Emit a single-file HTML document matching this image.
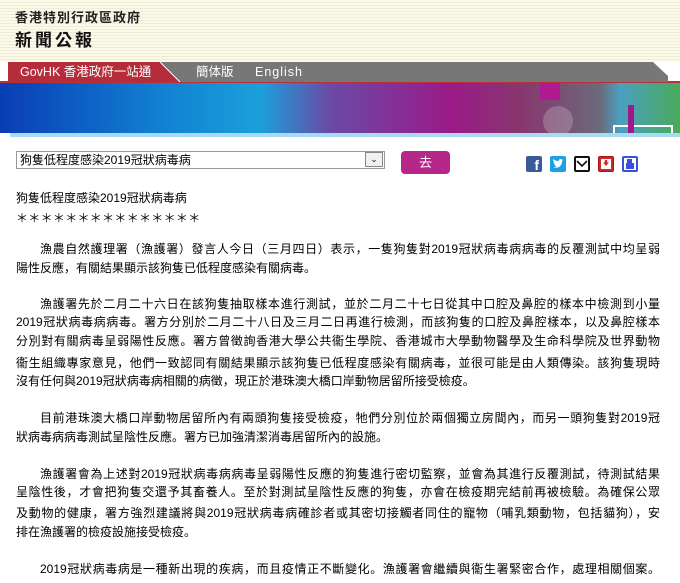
<!DOCTYPE html>
<html><head><meta charset="utf-8"><style>
*{margin:0;padding:0;box-sizing:border-box}
body{width:680px;height:583px;overflow:hidden;background:#fff;position:relative;font-family:"Liberation Sans","Noto Sans CJK TC",sans-serif;color:#000}
.hdr{position:absolute;left:0;top:0;width:680px;height:62px;background:repeating-linear-gradient(#fbf9ea 0 2px,#efecd6 2px 3px)}
.t1{position:absolute;left:15px;top:7px;font-size:13px;font-weight:bold;letter-spacing:1px;color:#222}
.t2{position:absolute;left:15px;top:26px;font-size:17px;font-weight:bold;letter-spacing:3px;color:#111}
.nav{position:absolute;top:62px;height:20px;font-size:12.5px;color:#fff;line-height:20px}
.ban{position:absolute;left:0;top:83px;width:680px;height:50px;background:linear-gradient(90deg,#0a3db5 0,#1180d2 160px,#1aa0da 260px,#6a4aa6 330px,#9a1a88 450px,#88366e 520px,#6a6a7a 600px,#4aa0c0 620px,#4aaa5a 680px)}
.line{position:absolute;left:16px;width:644px;font-size:12px;line-height:16px;white-space:nowrap;font-family:"Liberation Sans","WenQuanYi Zen Hei",sans-serif}
.j{text-align:justify;text-align-last:justify}
.ic{position:absolute;top:156px;width:16px;height:16px;border-radius:2px}
</style></head><body>
<div class="hdr"></div>
<div class="t1">香港特別行政區政府</div>
<div class="t2">新聞公報</div>
<div style="position:absolute;left:0;top:81px;width:680px;height:2px;background:#b8303a"></div>
<svg style="position:absolute;left:8px;top:62px" width="660" height="20"><polygon points="0,0 152,0 172,20 0,20" fill="#b52d3a"/><polygon points="152,0 645,0 660,14 660,20 172,20" fill="#777"/><line x1="152" y1="0" x2="172" y2="20" stroke="#fff" stroke-width="1"/></svg>
<div class="nav" style="left:20px">GovHK 香港政府一站通</div>
<div class="nav" style="left:196px">簡体版</div>
<div class="nav" style="left:255px;letter-spacing:1px">English</div>
<div class="ban"></div>
<div style="position:absolute;left:540px;top:83px;width:20px;height:17px;background:#b01a90"></div>
<div style="position:absolute;left:543px;top:106px;width:30px;height:30px;border-radius:50%;background:rgba(255,255,255,.2)"></div>
<div style="position:absolute;left:613px;top:125px;width:60px;height:10px;border:2px solid #fff;border-bottom:none"></div>
<div style="position:absolute;left:628px;top:105px;width:6px;height:28px;background:#a0188a"></div>
<div style="position:absolute;left:10px;top:133px;width:670px;height:4px;background:#a8daf2"></div>
<div style="position:absolute;left:16px;top:151px;width:369px;height:18px;border:1px solid #999;font-size:12px;line-height:16px;padding-left:3px;font-family:'Liberation Sans','WenQuanYi Zen Hei',sans-serif">狗隻低程度感染2019冠狀病毒病</div>
<div style="position:absolute;left:365px;top:152px;width:18px;height:15px;border:1px solid #888;background:#f0f0f0;font-size:9px;text-align:center;line-height:13px;color:#113">&#8964;</div>
<div style="position:absolute;left:401px;top:151px;width:49px;height:23px;border-radius:4px;background:#b5288a;color:#fff;font-size:13px;text-align:center;line-height:23px">去</div>
<div class="ic" style="left:526px;background:#3b5a98;color:#fff;font-weight:bold;font-size:14px;text-align:right;padding-right:3px;line-height:18px">f</div>
<div class="ic" style="left:550px;background:#1da1e2"><svg width="16" height="16"><path d="M3 11c4 2 9 0 9-6l1.5-1.5-1.5.3c-1-1.5-3.5-1-3.5 1.5C6 5 4.5 4 3.5 3c-.5 1.5 0 3 1 3.5H3.5c0 1 1 2 2 2.3L4.5 9c.5 1 1.5 1.3 2.5 1.3-1 .7-2.5 1-4 .7z" fill="#fff"/></svg></div>
<div class="ic" style="left:574px;background:#fff;border:2px solid #111"><svg width="12" height="12"><path d="M1 2l5 5 5-5" stroke="#111" stroke-width="1.6" fill="none"/></svg></div>
<div class="ic" style="left:598px;background:#c82a30;border:1px solid #a11"><div style="position:absolute;left:2px;top:2px;width:10px;height:10px;background:#fff"></div><div style="position:absolute;left:4px;top:3px;width:6px;height:6px;background:#c82a30;clip-path:polygon(30% 0,70% 0,70% 40%,100% 40%,50% 100%,0 40%,30% 40%)"></div></div>
<div class="ic" style="left:622px;background:#fff;border:2px solid #3a4ee0"><div style="position:absolute;left:2px;top:5px;width:8px;height:6px;background:#3a4ee0"></div><div style="position:absolute;left:3px;top:1px;width:5px;height:4px;background:#3a4ee0"></div></div>

<div class="line" style="top:190px">狗隻低程度感染2019冠狀病毒病</div>
<div class="line" style="top:210px;letter-spacing:0.3px">＊＊＊＊＊＊＊＊＊＊＊＊＊＊＊</div>
<div class="line j" style="top:241px;left:40px;width:620px">漁農自然護理署（漁護署）發言人今日（三月四日）表示，一隻狗隻對2019冠狀病毒病病毒的反覆測試中均呈弱</div>
<div class="line" style="top:260px">陽性反應，有關結果顯示該狗隻已低程度感染有關病毒。</div>
<div class="line j" style="top:296px;left:40px;width:620px">漁護署先於二月二十六日在該狗隻抽取樣本進行測試，並於二月二十七日從其中口腔及鼻腔的樣本中檢測到小量</div>
<div class="line j" style="top:314px">2019冠狀病毒病病毒。署方分別於二月二十八日及三月二日再進行檢測，而該狗隻的口腔及鼻腔樣本，以及鼻腔樣本</div>
<div class="line j" style="top:333px">分別對有關病毒呈弱陽性反應。署方曾徵詢香港大學公共衞生學院、香港城市大學動物醫學及生命科學院及世界動物</div>
<div class="line j" style="top:355px">衞生組織專家意見，他們一致認同有關結果顯示該狗隻已低程度感染有關病毒，並很可能是由人類傳染。該狗隻現時</div>
<div class="line" style="top:373px">沒有任何與2019冠狀病毒病相關的病徵，現正於港珠澳大橋口岸動物居留所接受檢疫。</div>
<div class="line j" style="top:410px;left:40px;width:620px">目前港珠澳大橋口岸動物居留所內有兩頭狗隻接受檢疫，牠們分別位於兩個獨立房間內，而另一頭狗隻對2019冠</div>
<div class="line" style="top:429px">狀病毒病病毒測試呈陰性反應。署方已加強清潔消毒居留所內的設施。</div>
<div class="line j" style="top:466px;left:40px;width:620px">漁護署會為上述對2019冠狀病毒病病毒呈弱陽性反應的狗隻進行密切監察，並會為其進行反覆測試，待測試結果</div>
<div class="line j" style="top:484px">呈陰性後，才會把狗隻交還予其畜養人。至於對測試呈陰性反應的狗隻，亦會在檢疫期完結前再被檢驗。為確保公眾</div>
<div class="line j" style="top:505px">及動物的健康，署方強烈建議將與2019冠狀病毒病確診者或其密切接觸者同住的寵物（哺乳類動物，包括貓狗），安</div>
<div class="line" style="top:524px">排在漁護署的檢疫設施接受檢疫。</div>
<div class="line j" style="top:561px;left:40px;width:620px">2019冠狀病毒病是一種新出現的疾病，而且疫情正不斷變化。漁護署會繼續與衞生署緊密合作，處理相關個案。</div>
</body></html>
